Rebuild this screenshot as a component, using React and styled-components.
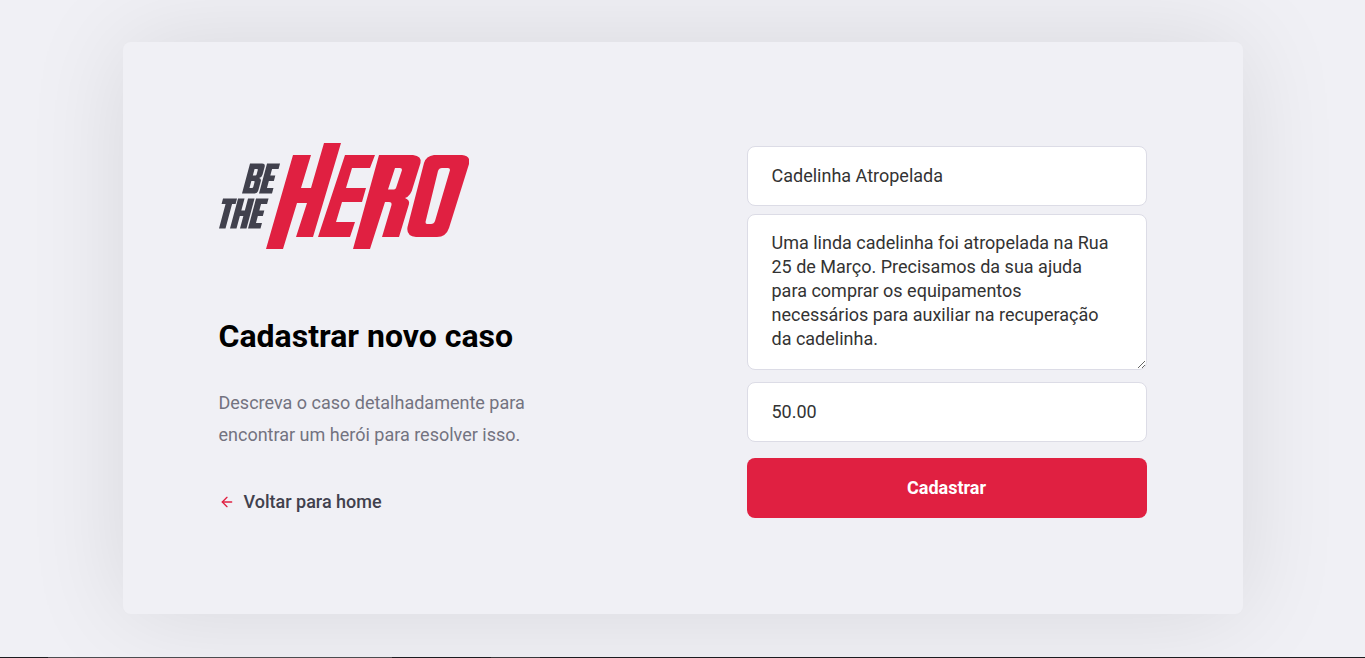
import React from 'react';
import styled, { createGlobalStyle } from 'styled-components';
import { FiArrowLeft } from 'react-icons/fi';

const GlobalStyle = createGlobalStyle`
  * { margin: 0; padding: 0; outline: 0; box-sizing: border-box; }
  body { background: #f0f0f5; font: 400 14px Roboto, sans-serif; }
  input, button, textarea { font: 400 18px Roboto, sans-serif; }
  button { cursor: pointer; }
`;

const Page = styled.div`
  min-height: 100vh;
  display: flex;
  flex-direction: column;
  overflow: hidden;
`;

const Container = styled.main`
  flex: 1;
  width: 100%;
  max-width: 1120px;
  margin: 0 auto;
  padding-bottom: 2px;
  display: flex;
  align-items: center;
  justify-content: center;
`;

const Content = styled.div`
  width: 100%;
  padding: 96px;
  background: #f0f0f5;
  box-shadow: 0 0 100px rgba(0, 0, 0, 0.1);
  border-radius: 8px;
  display: flex;
  justify-content: space-between;
  align-items: center;
`;

const Intro = styled.section`
  width: 100%;
  max-width: 380px;
`;

const Logo = styled.svg`
  display: block;
  width: 250px;
  height: 106px;
`;

const Title = styled.h1`
  margin: 68px 0 32px;
  font-size: 32px;
  line-height: 38px;
  color: #000;
`;

const Description = styled.p`
  font-size: 18px;
  line-height: 32px;
  color: #737380;
`;

const BackLink = styled.a`
  display: flex;
  align-items: center;
  gap: 9px;
  width: fit-content;
  margin-top: 40px;
  font-size: 18px;
  line-height: 21px;
  font-weight: 500;
  color: #41414d;
  text-decoration: none;
`;

const Form = styled.form`
  width: 100%;
  max-width: 400px;
  padding-top: 8px;
  display: flex;
  flex-direction: column;
`;

const Input = styled.input`
  width: 100%;
  height: 60px;
  padding: 0 24px;
  color: #333;
  background: #fff;
  border: 1px solid #dcdce6;
  border-radius: 8px;
`;

const TextArea = styled.textarea`
  width: 100%;
  height: 156px;
  min-height: 140px;
  margin: 8px 0 12px;
  padding: 16px 24px;
  line-height: 24px;
  color: #333;
  background: #fff;
  border: 1px solid #dcdce6;
  border-radius: 8px;
  resize: vertical;
`;

const Button = styled.button`
  width: 100%;
  height: 60px;
  margin-top: 16px;
  background: #e02041;
  border: 0;
  border-radius: 8px;
  color: #fff;
  font-weight: 700;
`;

const BottomEdge = styled.footer`
  height: 1px;
  background: linear-gradient(
    to right,
    #1c1c20 48px,
    #4c4c50 48px 392px,
    #1c1c20 392px 491px,
    #38383c 491px 540px,
    #1c1c20 540px
  );
`;

function HeroLogo() {
  return (
    <Logo viewBox="0 0 250 106" role="img" aria-label="Be The Hero">
      <g fill="#e02041" fillRule="evenodd">
        <path d="M74 12H92L82 45H92L105 0H122L94 94H77L88 60H78L64 106H47Z" />
        <path d="M126 12H156L151 25H133L127 45H147L143 59H123L117 79H136L131 94H99Z" />
        <path d="M160 12H194Q203 13 201.500 20L194 44Q192 53 186 55Q191 57 190 61L180 94H163L172.500 62Q173 59 170 59H166L151 106H134ZM176 25L169 46.500H175Q176.500 46 177 45L183 27Q183 25 181 25Z" />
        <path d="M215 12H243Q252 13 250 21L230 85Q227 94 218 94H197Q187 93 188.500 84L205 20Q207 13 215 12ZM223 25Q220 25 219 28L206.500 79Q206.500 81 208 81H212Q215 81 216 78L231 27Q231 25 229 25Z" />
      </g>
      <g fill="#41414d" fillRule="evenodd">
        <g transform="translate(23 50.500) skewX(-15)">
          <path d="M0 0V-30H12Q15.500 -30 15.500 -26.500V-19Q15.500 -16 13 -15.500Q15.500 -15 15.500 -12V-3.500Q15.500 0 12 0ZM6 -24.500V-18H8.500Q9.500 -18 9.500 -19V-23.500Q9.500 -24.500 8.500 -24.500ZM6 -12.500V-5.500H8.500Q9.500 -5.500 9.500 -6.500V-11.500Q9.500 -12.500 8.500 -12.500Z" />
          <path d="M17 0V-30H30V-24.500H23.500V-18H28.500V-12.500H23.500V-5.500H30V0Z" />
        </g>
        <g transform="translate(0 85.500) skewX(-15)">
          <path d="M0 0V-24.500H-4V-30H10V-24.500H6.500V0Z" />
          <path d="M11 0V-30H17.500V-18H21V-30H27.500V0H21V-12.500H17.500V0Z" />
          <path d="M29 0V-30H41.500V-24.500H35.500V-18H40.500V-12.500H35.500V-5.500H41.500V0Z" />
        </g>
      </g>
    </Logo>
  );
}

export default function App() {
  return (
    <Page>
      <GlobalStyle />
      <Container>
        <Content>
          <Intro>
            <HeroLogo />
            <Title>Cadastrar novo caso</Title>
            <Description>
              Descreva o caso detalhadamente para encontrar um herói para resolver isso.
            </Description>
            <BackLink href="#home">
              <FiArrowLeft size={16} color="#e02041" aria-hidden="true" />
              Voltar para home
            </BackLink>
          </Intro>
          <Form onSubmit={(event) => event.preventDefault()}>
            <Input aria-label="Título do caso" defaultValue="Cadelinha Atropelada" />
            <TextArea
              aria-label="Descrição"
              spellCheck={false}
              defaultValue="Uma linda cadelinha foi atropelada na Rua 25 de Março. Precisamos da sua ajuda para comprar os equipamentos necessários para auxiliar na recuperação da cadelinha."
            />
            <Input aria-label="Valor em reais" defaultValue="50.00" />
            <Button type="submit">Cadastrar</Button>
          </Form>
        </Content>
      </Container>
      <BottomEdge />
    </Page>
  );
}
